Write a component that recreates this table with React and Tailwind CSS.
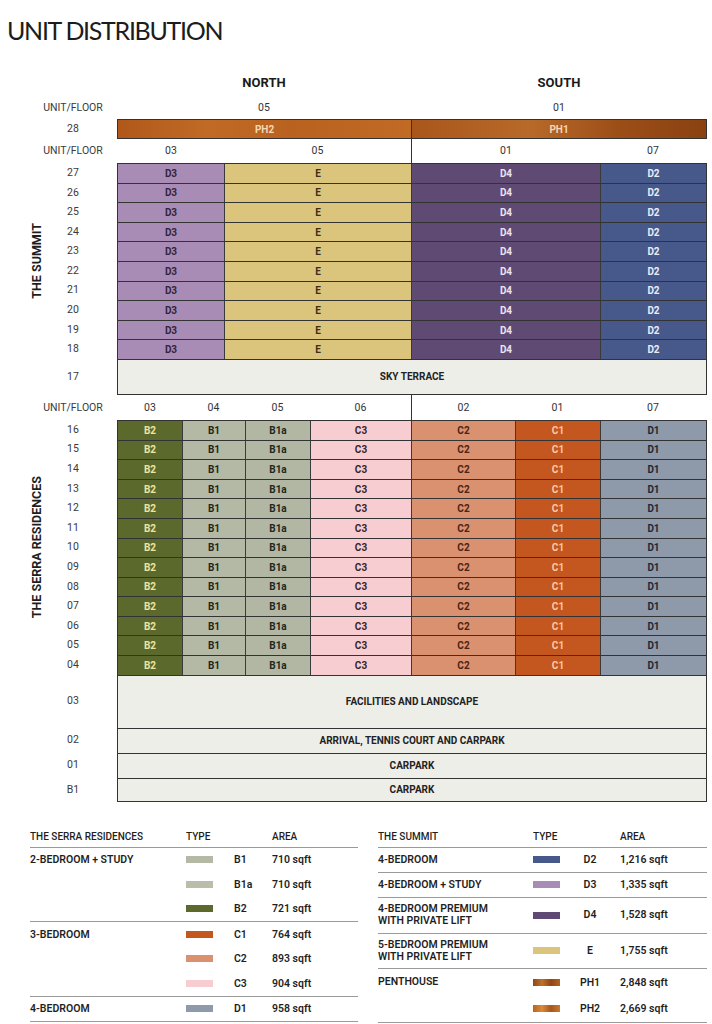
const SUMMIT = [
  { w: "w-[106px]", bg: "bg-[#a98cb6]", fg: "text-[#33243a]", t: "D3" },
  { w: "w-[187px]", bg: "bg-[#dbc47c]", fg: "text-[#3a311a]", t: "E" },
  { w: "w-[189px]", bg: "bg-[#5e4a73]", fg: "text-[#ebe3f1]", t: "D4" },
  { w: "flex-1", bg: "bg-[#46598a]", fg: "text-[#e9edf6]", t: "D2" },
];

const SERRA = [
  { w: "w-[64px]", bg: "bg-[#5b6a2c]", fg: "text-[#ece4a2]", t: "B2" },
  { w: "w-[63px]", bg: "bg-[#b4b9a5]", fg: "text-[#23261c]", t: "B1" },
  { w: "w-[65px]", bg: "bg-[#b2b7a3]", fg: "text-[#23261c]", t: "B1a" },
  { w: "w-[101px]", bg: "bg-[#f8cdd2]", fg: "text-[#3a2628]", t: "C3" },
  { w: "w-[104px]", bg: "bg-[#da9170]", fg: "text-[#4a2414]", t: "C2" },
  { w: "w-[85px]", bg: "bg-[#c3571f]", fg: "text-[#fbc9a4]", t: "C1" },
  { w: "flex-1", bg: "bg-[#8e99a9]", fg: "text-[#1f2733]", t: "D1" },
];

const SUMMIT_FLOORS = ["27", "26", "25", "24", "23", "22", "21", "20", "19", "18"];
const SERRA_FLOORS = ["16", "15", "14", "13", "12", "11", "10", "09", "08", "07", "06", "05", "04"];

function Floor({ children }) {
  return (
    <div className="w-[30px] mr-[29px] shrink-0 flex items-center justify-center whitespace-nowrap text-[10.5px] text-[#3a3a3a]">
      {children}
    </div>
  );
}

function Cells({ cols }) {
  return (
    <div className="flex w-[590px] border-x border-t border-[#333]">
      {cols.map((c, i) => (
        <div
          key={i}
          className={`${c.w} ${c.bg} ${c.fg} ${i > 0 ? "border-l border-[#3a3a3a]" : ""} flex items-center justify-center text-[10px] font-bold`}
        >
          {c.t}
        </div>
      ))}
    </div>
  );
}

function WideRow({ floor, h, children, last }) {
  return (
    <div className={`flex ml-[58px] ${h}`}>
      <Floor>{floor}</Floor>
      <div
        className={`flex w-[590px] items-center justify-center border-x border-t border-[#333] bg-[#eeeee9] text-[10px] font-bold text-[#222] ${last ? "border-b" : ""}`}
      >
        {children}
      </div>
    </div>
  );
}

function SideLabel({ children }) {
  return (
    <div className="w-[58px] shrink-0 flex items-center justify-end pr-[11px]">
      <span className="[writing-mode:vertical-rl] rotate-180 whitespace-nowrap text-[12.5px] font-bold text-[#1e1e1e]">
        {children}
      </span>
    </div>
  );
}

const SERRA_LEGEND = [
  { name: "2-BEDROOM + STUDY", items: [["bg-[#b4b9a5]", "B1", "710 sqft"], ["bg-[#b9bdaa]", "B1a", "710 sqft"], ["bg-[#5b6a2c]", "B2", "721 sqft"]] },
  { name: "3-BEDROOM", items: [["bg-[#c3571f]", "C1", "764 sqft"], ["bg-[#da9170]", "C2", "893 sqft"], ["bg-[#f8cdd2]", "C3", "904 sqft"]] },
  { name: "4-BEDROOM", items: [["bg-[#8e99a9]", "D1", "958 sqft"]] },
];

const SUMMIT_LEGEND = [
  { name: ["4-BEDROOM"], h: "h-[24.5px]", items: [["bg-[#46598a]", "D2", "1,216 sqft"]] },
  { name: ["4-BEDROOM + STUDY"], h: "h-[23.5px]", items: [["bg-[#a98cb6]", "D3", "1,335 sqft"]] },
  { name: ["4-BEDROOM PREMIUM", "WITH PRIVATE LIFT"], h: "h-[35px]", items: [["bg-[#5e4a73]", "D4", "1,528 sqft"]] },
  { name: ["5-BEDROOM PREMIUM", "WITH PRIVATE LIFT"], h: "h-[34.5px]", items: [["bg-[#dbc47c]", "E", "1,755 sqft"]] },
  {
    name: ["PENTHOUSE"],
    h: "h-[26.5px]",
    items: [
      ["bg-[linear-gradient(90deg,#8f4515,#c0702c,#8f4515,#b3621f)]", "PH1", "2,848 sqft"],
      ["bg-[linear-gradient(90deg,#b8651f,#d98a3a,#a9561a,#c77a30)]", "PH2", "2,669 sqft"],
    ],
  },
];

function Legend() {
  return (
    <div className="flex gap-[20px] pl-[30px] mt-[27px] text-[10.5px] text-[#1f1f1f] font-[Roboto,sans-serif]">
      <div className="w-[328px]">
        <div className="flex h-[19px] items-start border-b-[1.5px] border-[#9a9a9a] font-medium text-[10px]">
          <div className="w-[156px]">THE SERRA RESIDENCES</div>
          <div className="w-[86px]">TYPE</div>
          <div>AREA</div>
        </div>
        {SERRA_LEGEND.map((g) => (
          <div key={g.name} className="flex border-b-[1.5px] border-[#9a9a9a]">
            <div className="w-[156px] h-[24.5px] flex items-center font-semibold">{g.name}</div>
            <div className="flex flex-col">
              {g.items.map(([bg, t, a]) => (
                <div key={t} className="flex h-[24.5px] items-center font-semibold">
                  <div className={`w-[27px] h-[7px] ${bg}`} />
                  <div className="w-[59px] pl-[21px]">{t}</div>
                  <div>{a}</div>
                </div>
              ))}
            </div>
          </div>
        ))}
      </div>
      <div className="w-[329px]">
        <div className="flex h-[19px] items-start border-b-[1.5px] border-[#9a9a9a] font-medium text-[10px]">
          <div className="w-[155px]">THE SUMMIT</div>
          <div className="w-[87px]">TYPE</div>
          <div>AREA</div>
        </div>
        {SUMMIT_LEGEND.map((g) => (
          <div key={g.name[0]} className="flex border-b-[1.5px] border-[#9a9a9a]">
            <div className={`w-[155px] ${g.h} flex flex-col justify-center font-semibold leading-[12px]`}>
              {g.name.map((n) => (
                <div key={n}>{n}</div>
              ))}
            </div>
            <div className="flex flex-col">
              {g.items.map(([bg, t, a]) => (
                <div key={t} className={`flex ${g.h} items-center font-semibold`}>
                  <div className={`w-[27px] h-[7px] ${bg}`} />
                  <div className="w-[60px] text-center">{t}</div>
                  <div>{a}</div>
                </div>
              ))}
            </div>
          </div>
        ))}
      </div>
    </div>
  );
}

export default function App() {
  return (
    <div className="w-[712px] h-[1024px] bg-white font-[Roboto,sans-serif] text-[#222] pt-[16px] overflow-hidden">
      <h1 className="pl-[7px] text-[25px] leading-[28px] font-normal tracking-[-1.3px] text-[#1c1c1c] font-[Lato,sans-serif]">
        UNIT DISTRIBUTION
      </h1>

      {/* North / South headings */}
      <div className="flex ml-[117px] mt-[31px] h-[16px] items-center text-[13px] font-bold text-[#1a1a1a]">
        <div className="w-[294px] text-center">NORTH</div>
        <div className="w-[296px] text-center">SOUTH</div>
      </div>

      <div className="flex ml-[58px] h-[22px] mt-[6px]">
        <Floor>UNIT/FLOOR</Floor>
        <div className="flex w-[590px] items-center text-[10.5px] text-[#333]">
          <div className="w-[294px] text-center">05</div>
          <div className="flex-1 text-center">01</div>
        </div>
      </div>

      {/* Penthouses */}
      <div className="flex ml-[58px] h-[20px]">
        <Floor>28</Floor>
        <div className="flex w-[590px] border border-[#333] text-[10px] font-bold text-[#f6d6b4]">
          <div className="w-[293px] flex items-center justify-center bg-[linear-gradient(90deg,#b0581a,#c06a26_30%,#b9621f_60%,#c06a26)]">
            PH2
          </div>
          <div className="flex-1 border-l border-[#333] flex items-center justify-center bg-[linear-gradient(90deg,#a9561a,#b86a2a_40%,#9c4e17_70%,#8a4212)]">
            PH1
          </div>
        </div>
      </div>

      <div className="flex ml-[58px] h-[24px]">
        <Floor>UNIT/FLOOR</Floor>
        <div className="flex w-[590px] border-x border-transparent items-center text-[10.5px] text-[#333]">
          <div className="w-[106px] text-center">03</div>
          <div className="w-[187px] self-stretch flex items-center justify-center">05</div>
          <div className="w-[189px] self-stretch border-l border-[#333] flex items-center justify-center">01</div>
          <div className="flex-1 text-center">07</div>
        </div>
      </div>

      {/* The Summit */}
      <div className="flex">
        <SideLabel>THE SUMMIT</SideLabel>
        <div className="flex flex-col">
          {SUMMIT_FLOORS.map((f) => (
            <div key={f} className="flex h-[19.6px]">
              <Floor>{f}</Floor>
              <Cells cols={SUMMIT} />
            </div>
          ))}
        </div>
      </div>

      <WideRow floor="17" h="h-[36px]" last>
        SKY TERRACE
      </WideRow>

      <div className="flex ml-[58px] h-[25px]">
        <Floor>UNIT/FLOOR</Floor>
        <div className="flex w-[590px] border-x border-transparent items-center text-[10.5px] text-[#333]">
          <div className="w-[64px] text-center">03</div>
          <div className="w-[63px] text-center">04</div>
          <div className="w-[65px] text-center">05</div>
          <div className="w-[101px] text-center">06</div>
          <div className="w-[104px] self-stretch border-l border-[#333] flex items-center justify-center">02</div>
          <div className="w-[85px] text-center">01</div>
          <div className="flex-1 text-center">07</div>
        </div>
      </div>

      {/* The Serra Residences */}
      <div className="flex">
        <SideLabel>THE SERRA RESIDENCES</SideLabel>
        <div className="flex flex-col">
          {SERRA_FLOORS.map((f) => (
            <div key={f} className="flex h-[19.6px]">
              <Floor>{f}</Floor>
              <Cells cols={SERRA} />
            </div>
          ))}
        </div>
      </div>

      <WideRow floor="03" h="h-[53px]">FACILITIES AND LANDSCAPE</WideRow>
      <WideRow floor="02" h="h-[25px]">ARRIVAL, TENNIS COURT AND CARPARK</WideRow>
      <WideRow floor="01" h="h-[25px]">CARPARK</WideRow>
      <WideRow floor="B1" h="h-[24px]" last>
        CARPARK
      </WideRow>

      <Legend />
    </div>
  );
}
